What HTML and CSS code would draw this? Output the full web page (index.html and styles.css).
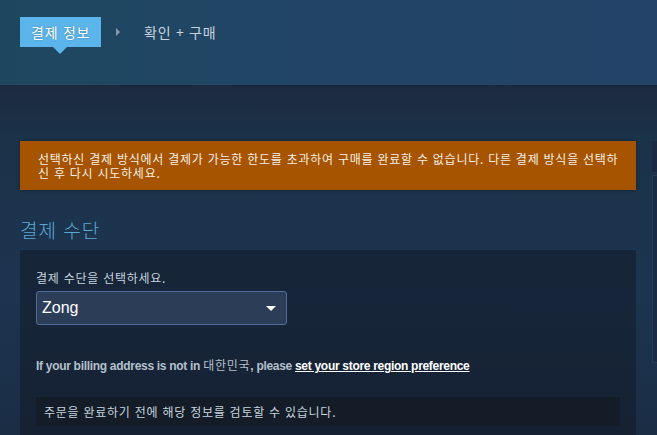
FILE: index.html
```html
<!DOCTYPE html>
<html lang="ko">
<head>
  <meta charset="UTF-8">
  <title>결제 정보</title>
  <link rel="stylesheet" href="styles.css">
</head>
<body>

<header class="checkout-header">
  <div class="steps">
    <div class="step active">결제 정보</div>
    <span class="step-arrow"></span>
    <div class="step">확인 + 구매</div>
  </div>
</header>

<div class="page">
  <div class="main-col">
    <div class="error-box">
      선택하신 결제 방식에서 결제가 가능한 한도를 초과하여 구매를 완료할 수 없습니다. 다른 결제 방식을 선택하신 후 다시 시도하세요.
    </div>

    <h2 class="section-title">결제 수단</h2>

    <div class="panel">
      <label class="field-label">결제 수단을 선택하세요.</label>
      <div class="select">
        <span>Zong</span>
        <span class="select-arrow"></span>
      </div>

      <p class="region-note">
        If your billing address is not in <span class="kr">대한민국</span>, please <a href="#">set your store region preference</a>
      </p>

      <div class="review-note">주문을 완료하기 전에 해당 정보를 검토할 수 있습니다.</div>
    </div>
  </div>
  <div class="side-col">
    <div class="side-top"></div>
    <div class="side-box"></div>
  </div>
</div>

</body>
</html>
```

FILE: styles.css
```css
html, body {
  height: 100%;
}
body {
  margin: 0;
  font-family: "Liberation Sans", "Noto Sans CJK KR", sans-serif;
  color: #c6d4df;
  background: linear-gradient(to bottom, #1c2a40 86px, #1b3349 140px, #1c3450 300px, #1b2d45 100%);
  overflow: hidden;
}
.kr, .error-box, .section-title, .field-label, .review-note, .step {
  font-family: "Noto Sans CJK KR", sans-serif;
  letter-spacing: 0.75px;
}

/* header with steps */
.checkout-header {
  height: 86px;
  background: linear-gradient(to right, #1e475f, #224567 50%, #234468);
  border-bottom: 1px solid #1a2a3e;
  box-sizing: border-box;
}
.steps {
  display: flex;
  align-items: center;
  padding: 17px 0 0 20px;
}
.step {
  font-size: 14px;
  color: #c6d4df;
  line-height: 30px;
}
.step.active {
  position: relative;
  background: #5cb5ea;
  color: #fff;
  padding: 0 9px 0 11px;
  width: 61px;
  text-shadow: 0 0 2px rgba(0,0,0,0.3);
}
.step.active::after {
  content: "";
  position: absolute;
  left: 33px;
  top: 30px;
  border-left: 7px solid transparent;
  border-right: 7px solid transparent;
  border-top: 7px solid #5cb5ea;
}
.step-arrow {
  width: 0;
  height: 0;
  border-top: 4px solid transparent;
  border-bottom: 4px solid transparent;
  border-left: 4px solid #8a9bab;
  margin: 0 24px 0 15px;
}

/* page body */
.page {
  display: flex;
  padding: 55px 0 0 20px;
  gap: 16px;
}
.main-col {
  width: 616px;
  flex-shrink: 0;
}
.error-box {
  background: #a65400;
  color: #f4efe6;
  font-size: 12px;
  line-height: 14px;
  padding: 11px 13px 10px 18px;
  box-shadow: 0 0 3px rgba(0,0,0,0.4);
}
.section-title {
  font-size: 19px;
  font-weight: 300;
  letter-spacing: 1px;
  color: #5aa9d6;
  margin: 28px 0 0;
  line-height: 24px;
}
.panel {
  margin-top: 8px;
  background: rgba(18, 26, 38, 0.55);
  padding: 20px 16px 9px 16px;
}
.field-label {
  display: block;
  font-size: 12px;
  line-height: 16px;
}
.select {
  margin-top: 5px;
  width: 251px;
  height: 34px;
  box-sizing: border-box;
  border: 1px solid #4f6c9c;
  border-radius: 3px;
  background: #2c3d58;
  display: flex;
  align-items: center;
  justify-content: space-between;
  padding: 0 10px 0 5px;
  color: #fff;
  font-size: 16px;
}
.select-arrow {
  width: 0;
  height: 0;
  border-left: 5px solid transparent;
  border-right: 5px solid transparent;
  border-top: 5px solid #fff;
}
.region-note {
  margin: 32px 0 0;
  font-size: 12px;
  font-weight: bold;
  line-height: 16px;
  letter-spacing: -0.3px;
  color: #b4c0cc;
}
.region-note .kr {
  font-weight: normal;
}
.region-note a {
  color: #fff;
  text-decoration: underline;
}
.review-note {
  margin-top: 23px;
  background: #141c28;
  font-size: 12px;
  line-height: 29px;
  padding: 0 8px;
  width: 568px;
}

/* cut-off sidebar */
.side-col {
  flex: 1;
  min-width: 0;
}
.side-top {
  height: 31px;
  background: #1b2a40;
}
.side-box {
  margin-top: 3px;
  height: 186px;
  background: #1c2b44;
  border: 1px solid #2a3b58;
  border-right: none;
}
```
